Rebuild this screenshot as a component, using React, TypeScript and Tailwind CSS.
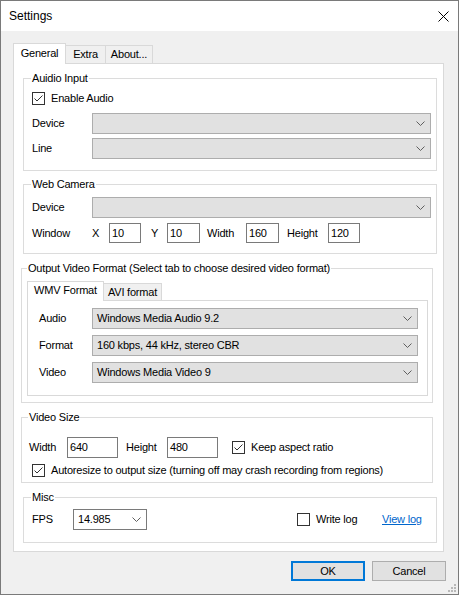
import React from 'react';

const Chevron = () => (
  <svg width="9" height="6" viewBox="0 0 9 6" className="shrink-0">
    <path d="M0.5 0.5 L4.5 4.5 L8.5 0.5" fill="none" stroke="#5f5f5f" strokeWidth="1" />
  </svg>
);

function Check({ checked, label }: { checked?: boolean; label: string }) {
  return (
    <div className="flex items-center">
      <div className="w-[13px] h-[13px] border border-[#333333] bg-white flex items-center justify-center shrink-0">
        {checked && (
          <svg width="11" height="11" viewBox="0 0 11 11">
            <path d="M1.5 5.5 L4 8 L9.5 2.5" fill="none" stroke="#333333" strokeWidth="1" />
          </svg>
        )}
      </div>
      <span className="ml-[6px] whitespace-nowrap">{label}</span>
    </div>
  );
}

function Combo({ value = '', white, className = '' }: { value?: string; white?: boolean; className?: string }) {
  return (
    <div
      className={`h-[21px] flex items-center justify-between pl-[4px] pr-[5px] border ${
        white ? 'bg-white border-[#7a7a7a]' : 'bg-[#e1e1e1] border-[#adadad]'
      } ${className}`}
    >
      <span className="whitespace-nowrap">{value}</span>
      <Chevron />
    </div>
  );
}

function TextBox({ value, className = '' }: { value: string; className?: string }) {
  return (
    <div className={`h-[20px] flex items-center pl-[2px] bg-white border border-[#7a7a7a] ${className}`}>
      {value}
    </div>
  );
}

function Group({
  label,
  labelLeft,
  className = '',
  children,
}: {
  label: string;
  labelLeft: string;
  className?: string;
  children: React.ReactNode;
}) {
  return (
    <div className={`relative border border-[#dcdcdc] ${className}`}>
      <span className={`absolute top-[-8px] ${labelLeft} px-[1px] bg-white leading-[15px] whitespace-nowrap`}>{label}</span>
      {children}
    </div>
  );
}

export default function App() {
  return (
    <div className="relative w-[459px] h-[595px] flex flex-col border border-[#7a7a7a] bg-[#f0f0f0] text-black text-[11px] tracking-[-0.2px] font-['Liberation_Sans',Arial,sans-serif]">
      {/* title bar */}
      <div className="h-[30px] bg-white flex items-center justify-between pl-[8px] pr-[9px] shrink-0">
        <span className="text-[12px] tracking-normal">Settings</span>
        <svg width="11" height="11" viewBox="0 0 11 11">
          <path d="M0.5 0.5 L10.5 10.5 M10.5 0.5 L0.5 10.5" stroke="#000" strokeWidth="1" />
        </svg>
      </div>

      <div className="flex-1 px-[12px] pt-[12px]">
        {/* main tabs */}
        <div className="flex items-end h-[20px]">
          <div className="relative z-10 h-[21px] -mb-px w-[53px] bg-white border-x border-t border-[#d9d9d9] flex items-center justify-center pb-[2px]">
            General
          </div>
          <div className="h-[18px] w-[40px] border-r border-t border-[#d9d9d9] flex items-center justify-center">Extra</div>
          <div className="h-[18px] w-[47px] border-r border-t border-[#d9d9d9] flex items-center justify-center">About...</div>
        </div>

        <div className="h-[489px] w-[431px] bg-white border border-[#d9d9d9] flex flex-col">
          {/* Audio Input */}
          <Group label="Auidio Input" labelLeft="left-[7px]" className="ml-[9px] mt-[14px] w-[414px] pt-[9px] pb-[11px] pl-[8px] pr-[5px]">
            <div className="h-[20px] flex items-center">
              <Check checked label="Enable Audio" />
            </div>
            <div className="mt-[5px] flex items-center">
              <span className="w-[60px]">Device</span>
              <Combo className="flex-1" />
            </div>
            <div className="mt-[4px] flex items-center">
              <span className="w-[60px]">Line</span>
              <Combo className="flex-1" />
            </div>
          </Group>

          {/* Web Camera */}
          <Group label="Web Camera" labelLeft="left-[7px]" className="ml-[9px] mt-[13px] w-[414px] pt-[12px] pb-[10px] pl-[8px] pr-[5px]">
            <div className="flex items-center">
              <span className="w-[60px]">Device</span>
              <Combo className="flex-1" />
            </div>
            <div className="mt-[5px] h-[20px] flex items-center">
              <span className="w-[60px]">Window</span>
              <span className="w-[17px]">X</span>
              <TextBox value="10" className="w-[32px]" />
              <span className="ml-[10px] w-[16px]">Y</span>
              <TextBox value="10" className="w-[33px]" />
              <span className="ml-[7px] w-[39px]">Width</span>
              <TextBox value="160" className="w-[33px]" />
              <span className="ml-[8px] w-[41px]">Height</span>
              <TextBox value="120" className="w-[32px]" />
            </div>
          </Group>

          {/* Output Video Format */}
          <Group
            label="Output Video Format (Select tab to choose desired video format)"
            labelLeft="left-[5px]"
            className="ml-[7px] mt-[14px] w-[412px] pt-[12px] pb-[6px] pl-[5px] pr-[4px]"
          >
            <div className="flex items-end h-[19px]">
              <div className="relative z-10 h-[20px] -mb-px w-[77px] bg-white border-x border-t border-[#d9d9d9] flex items-center justify-center pb-[2px]">
                WMV Format
              </div>
              <div className="h-[17px] w-[58px] bg-[#f0f0f0] border-r border-t border-[#d9d9d9] flex items-center justify-center">
                AVI format
              </div>
            </div>
            <div className="h-[96px] border border-[#d9d9d9] pt-[7px] pl-[11px] pr-[9px] flex flex-col gap-[6px]">
              <div className="flex items-center">
                <span className="w-[53px]">Audio</span>
                <Combo className="flex-1" value="Windows Media Audio 9.2" />
              </div>
              <div className="flex items-center">
                <span className="w-[53px]">Format</span>
                <Combo className="flex-1" value="160 kbps, 44 kHz, stereo CBR" />
              </div>
              <div className="flex items-center">
                <span className="w-[53px]">Video</span>
                <Combo className="flex-1" value="Windows Media Video 9" />
              </div>
            </div>
          </Group>

          {/* Video Size */}
          <Group label="Video Size" labelLeft="left-[6px]" className="ml-[7px] mt-[14px] w-[412px] pt-[19px] pb-[3px] pl-[7px]">
            <div className="h-[21px] flex items-center">
              <span className="w-[38px]">Width</span>
              <TextBox value="640" className="w-[51px] h-[21px]" />
              <span className="ml-[8px] w-[41px]">Height</span>
              <TextBox value="480" className="w-[51px] h-[21px]" />
              <div className="ml-[14px]">
                <Check checked label="Keep aspect ratio" />
              </div>
            </div>
            <div className="mt-[3px] h-[18px] pl-[3px] flex items-center">
              <Check checked label="Autoresize to output size (turning off may crash recording from regions)" />
            </div>
          </Group>

          {/* Misc */}
          <Group label="Misc" labelLeft="left-[7px]" className="ml-[9px] mt-[14px] w-[414px] pt-[11px] pb-[12px] pl-[8px]">
            <div className="h-[21px] flex items-center">
              <span className="w-[41px]">FPS</span>
              <Combo white className="w-[74px]" value="14.985" />
              <div className="ml-[150px] w-[85px]">
                <Check label="Write log" />
              </div>
              <span className="text-[#0066cc] underline">View log</span>
            </div>
          </Group>
        </div>

        {/* buttons */}
        <div className="mt-[9px] flex justify-end gap-[7px]">
          <div className="w-[74px] h-[20px] bg-[#e1e1e1] border-2 border-[#0078d7] flex items-center justify-center">OK</div>
          <div className="w-[74px] h-[20px] bg-[#e1e1e1] border border-[#adadad] flex items-center justify-center">Cancel</div>
        </div>
      </div>

      {/* resize grip */}
      <svg width="9" height="9" viewBox="0 0 9 9" className="absolute right-[1px] bottom-[1px]">
        <rect x="6" y="0" width="2" height="2" fill="#b8b8b8" />
        <rect x="3" y="3" width="2" height="2" fill="#b8b8b8" />
        <rect x="6" y="3" width="2" height="2" fill="#b8b8b8" />
        <rect x="0" y="6" width="2" height="2" fill="#b8b8b8" />
        <rect x="3" y="6" width="2" height="2" fill="#b8b8b8" />
        <rect x="6" y="6" width="2" height="2" fill="#b8b8b8" />
      </svg>
    </div>
  );
}
